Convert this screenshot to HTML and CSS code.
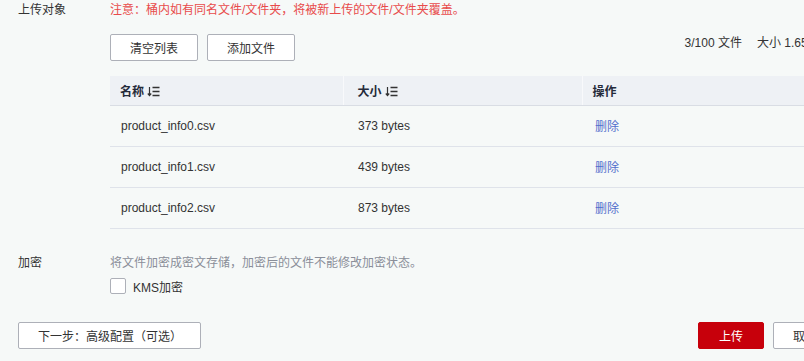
FILE: index.html
```html
<!DOCTYPE html>
<html lang="zh-CN">
<head>
	<meta charset="UTF-8">
	<title>上传对象</title>
	<link rel="stylesheet" href="styles.css">
</head>
<body>

	<div class="formRow">
		<div class="formLabel">上传对象</div>
		<div class="formBody">
			<p class="note">注意：桶内如有同名文件/文件夹，将被新上传的文件/文件夹覆盖。</p>
			<div class="toolbar">
				<button class="btn">清空列表</button>
				<button class="btn">添加文件</button>
				<div class="stats">
					<span>3/100 文件</span>
					<span>大小 1.65 KB</span>
				</div>
			</div>
			<table class="fileTable">
				<thead>
					<tr>
						<th class="colName">名称 <svg class="sortIcon" width="13" height="11" viewBox="0 0 13 11"><path d="M2.5 1v8.5M0.8 7.5l1.7 2 1.7-2" fill="none" stroke="#333" stroke-width="1.2"/><path d="M5.5 1.5h7M5.5 5.5h7M5.5 9.5h7" stroke="#333" stroke-width="1.3"/></svg></th>
						<th class="colSize">大小 <svg class="sortIcon" width="13" height="11" viewBox="0 0 13 11"><path d="M2.5 1v8.5M0.8 7.5l1.7 2 1.7-2" fill="none" stroke="#333" stroke-width="1.2"/><path d="M5.5 1.5h7M5.5 5.5h7M5.5 9.5h7" stroke="#333" stroke-width="1.3"/></svg></th>
						<th class="colOp">操作</th>
					</tr>
				</thead>
				<tbody>
					<tr>
						<td>product_info0.csv</td>
						<td>373 bytes</td>
						<td><a href="#">删除</a></td>
					</tr>
					<tr>
						<td>product_info1.csv</td>
						<td>439 bytes</td>
						<td><a href="#">删除</a></td>
					</tr>
					<tr>
						<td>product_info2.csv</td>
						<td>873 bytes</td>
						<td><a href="#">删除</a></td>
					</tr>
				</tbody>
			</table>
		</div>
	</div>

	<div class="formRow encrypt">
		<div class="formLabel">加密</div>
		<div class="formBody">
			<p class="hint">将文件加密成密文存储，加密后的文件不能修改加密状态。</p>
			<label class="check"><span class="box"></span>KMS加密</label>
		</div>
	</div>

	<div class="footer">
		<button class="btn btnWide">下一步：高级配置（可选）</button>
		<div class="footRight">
			<button class="btn btnRed">上传</button>
			<button class="btn">取消</button>
		</div>
	</div>

</body>
</html>
```

FILE: styles.css
```css
*{
	margin: 0;
	padding: 0;
	box-sizing: border-box;
}
body{
	width: 804px;
	height: 361px;
	overflow: hidden;
	background: #f6f9f8;
	font-family: "Liberation Sans", "Noto Sans CJK SC", sans-serif;
	font-size: 12px;
	color: #333;
}
.formRow{
	display: flex;
	padding-left: 18px;
}
.formLabel{
	width: 92px;
	flex: none;
	line-height: 20px;
	color: #333;
}
.formBody{
	flex: none;
	width: 760px;
}
.note{
	line-height: 20px;
	color: #e84b4b;
}
.toolbar{
	display: flex;
	align-items: center;
	margin-top: 14px;
	gap: 9px;
}
.stats{
	margin-left: auto;
	display: flex;
	gap: 15px;
	padding-right: 43px;
	color: #333;
	margin-top: -13px;
}
.btn{
	height: 27px;
	padding: 0 19px;
	border: 1px solid #adb0b8;
	border-radius: 2px;
	background: #fff;
	font-family: "Liberation Sans", "Noto Sans CJK SC", sans-serif;
	font-size: 12px;
	color: #333;
}
.fileTable{
	width: 760px;
	margin-top: 15px;
	border-collapse: collapse;
	table-layout: fixed;
}
.fileTable th{
	height: 29px;
	padding: 0 10px;
	text-align: left;
	font-weight: bold;
	background: #eef1f5;
	border-bottom: 1px solid #d9dde4;
	color: #252b3a;
}
.fileTable th + th{
	border-left: 1px solid #f8f9fb;
}
.colName{
	width: 233px;
}
.colSize{
	width: 239px;
	padding-left: 14px !important;
}
.sortIcon{
	vertical-align: -1px;
}
.fileTable td{
	height: 41px;
	padding: 0 10px;
	border-bottom: 1px solid #dfe3ea;
	color: #333;
}
.fileTable td:first-child{
	padding-left: 11px;
}
.fileTable td:nth-child(2){
	padding-left: 15px;
}
.fileTable td:nth-child(3){
	padding-left: 13px;
}
.fileTable a{
	color: #526ecc;
	text-decoration: none;
}
.encrypt{
	margin-top: 24px;
}
.hint{
	line-height: 20px;
	color: #8a8e99;
}
.check{
	display: flex;
	align-items: center;
	gap: 7px;
	margin-top: 5px;
	color: #333;
}
.box{
	width: 16px;
	height: 16px;
	border: 1px solid #adb0b8;
	border-radius: 2px;
	background: #fff;
}
.footer{
	display: flex;
	align-items: center;
	padding-left: 18px;
	margin-top: 27px;
}
.btnWide{
	width: 183px;
}
.footRight{
	margin-left: auto;
	display: flex;
	gap: 9px;
	margin-right: -33px;
}
.btnRed{
	width: 66px;
	background: #c7000b;
	border-color: #c7000b;
	color: #fff;
}
```
